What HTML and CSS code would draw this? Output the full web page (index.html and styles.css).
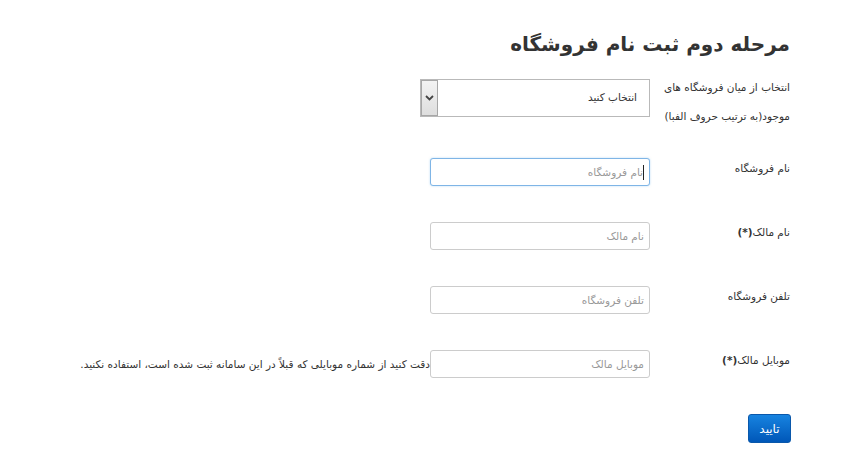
FILE: index.html
```html
<!DOCTYPE html>
<html lang="fa" dir="rtl">
<head>
<meta charset="utf-8">
<link rel="stylesheet" href="styles.css">
</head>
<body>
<div class="page">
  <h1 class="title">مرحله دوم ثبت نام فروشگاه</h1>
  <form class="form">
    <div class="row row-select">
      <label class="label label-light">انتخاب از میان فروشگاه های<br>موجود(به ترتیب حروف الفبا)</label>
      <div class="select">
        <span class="select-text">انتخاب کنید</span>
        <span class="select-arrow">
          <svg width="9" height="6" viewBox="0 0 9 6"><path d="M1 1 L4.5 4.5 L8 1" fill="none" stroke="#444" stroke-width="1.8"/></svg>
        </span>
      </div>
    </div>
    <div class="row">
      <label class="label">نام فروشگاه</label>
      <div class="input focus"><span class="caret"></span><span class="ph">نام فروشگاه</span></div>
    </div>
    <div class="row">
      <label class="label">نام مالک<b>(*)</b></label>
      <div class="input"><span class="ph">نام مالک</span></div>
    </div>
    <div class="row">
      <label class="label">تلفن فروشگاه</label>
      <div class="input"><span class="ph">تلفن فروشگاه</span></div>
    </div>
    <div class="row">
      <label class="label">موبایل مالک<b>(*)</b></label>
      <div class="input"><span class="ph">موبایل مالک</span></div>
      <span class="help">دقت کنید از شماره موبایلی که قبلاً در این سامانه ثبت شده است، استفاده نکنید.</span>
    </div>
    <div class="row row-last">
      <button type="button" class="btn">تایید</button>
    </div>
  </form>
</div>
</body>
</html>
```

FILE: styles.css
```css
* { box-sizing: border-box; }
html, body { margin: 0; padding: 0; background: #fff; }
body {
  font-family: "DejaVu Sans", "Noto Sans", sans-serif;
  color: #333;
  font-size: 11px;
}
.page {
  padding: 26px 66px 0 0;
}
.title {
  margin: 0;
  font-size: 20px;
  font-weight: bold;
  line-height: 36px;
  color: #333;
}
.form {
  margin-top: 17px;
}
.row {
  display: flex;
  align-items: flex-start;
  margin-bottom: 36px;
}
.row-select { margin-bottom: 41px; }
.row-last { margin-bottom: 0; }
.label {
  width: 140px;
  flex: none;
  font-weight: normal;
  line-height: 20px;
  font-size: 10.5px;
  white-space: nowrap;
}
.label b { font-weight: bold; }
.label-light {
  line-height: 29px;
  margin-top: -6px;
  margin-bottom: -30px;
}
.select {
  width: 230px;
  height: 38px;
  border: 1px solid #b9b9b9;
  display: flex;
  align-items: stretch;
  background: #fff;
}
.select-text {
  flex: 1;
  padding: 11px 12px 0 0;
  font-size: 10.5px;
  color: #333;
}
.select-arrow {
  width: 17px;
  border: 1px solid #a7a7a7;
  background: linear-gradient(#f3f3f3, #dedede);
  display: flex;
  align-items: center;
  justify-content: center;
}
.input {
  width: 220px;
  height: 28px;
  border: 1px solid #ccc;
  border-radius: 3px;
  background: #fff;
  padding: 0 5px 0 0;
  display: flex;
  align-items: center;
  flex: none;
}
.input.focus {
  border-color: #7fb5e6;
  box-shadow: 0 0 2px rgba(102, 175, 233, 0.5);
}
.caret {
  width: 1px;
  height: 15px;
  background: #222;
}
.ph {
  color: #999;
  font-size: 10.5px;
}
.help {
  font-size: 10.5px;
  line-height: 28px;
  color: #333;
  white-space: nowrap;
}
.btn {
  font-family: "DejaVu Sans", sans-serif;
  font-size: 12px;
  color: #fff;
  width: 43px;
  height: 29px;
  margin-right: -1px;
  border: 1px solid #0a58ab;
  border-radius: 3px;
  background: linear-gradient(#1783e0, #0057b8);
  padding: 0;
}
```
